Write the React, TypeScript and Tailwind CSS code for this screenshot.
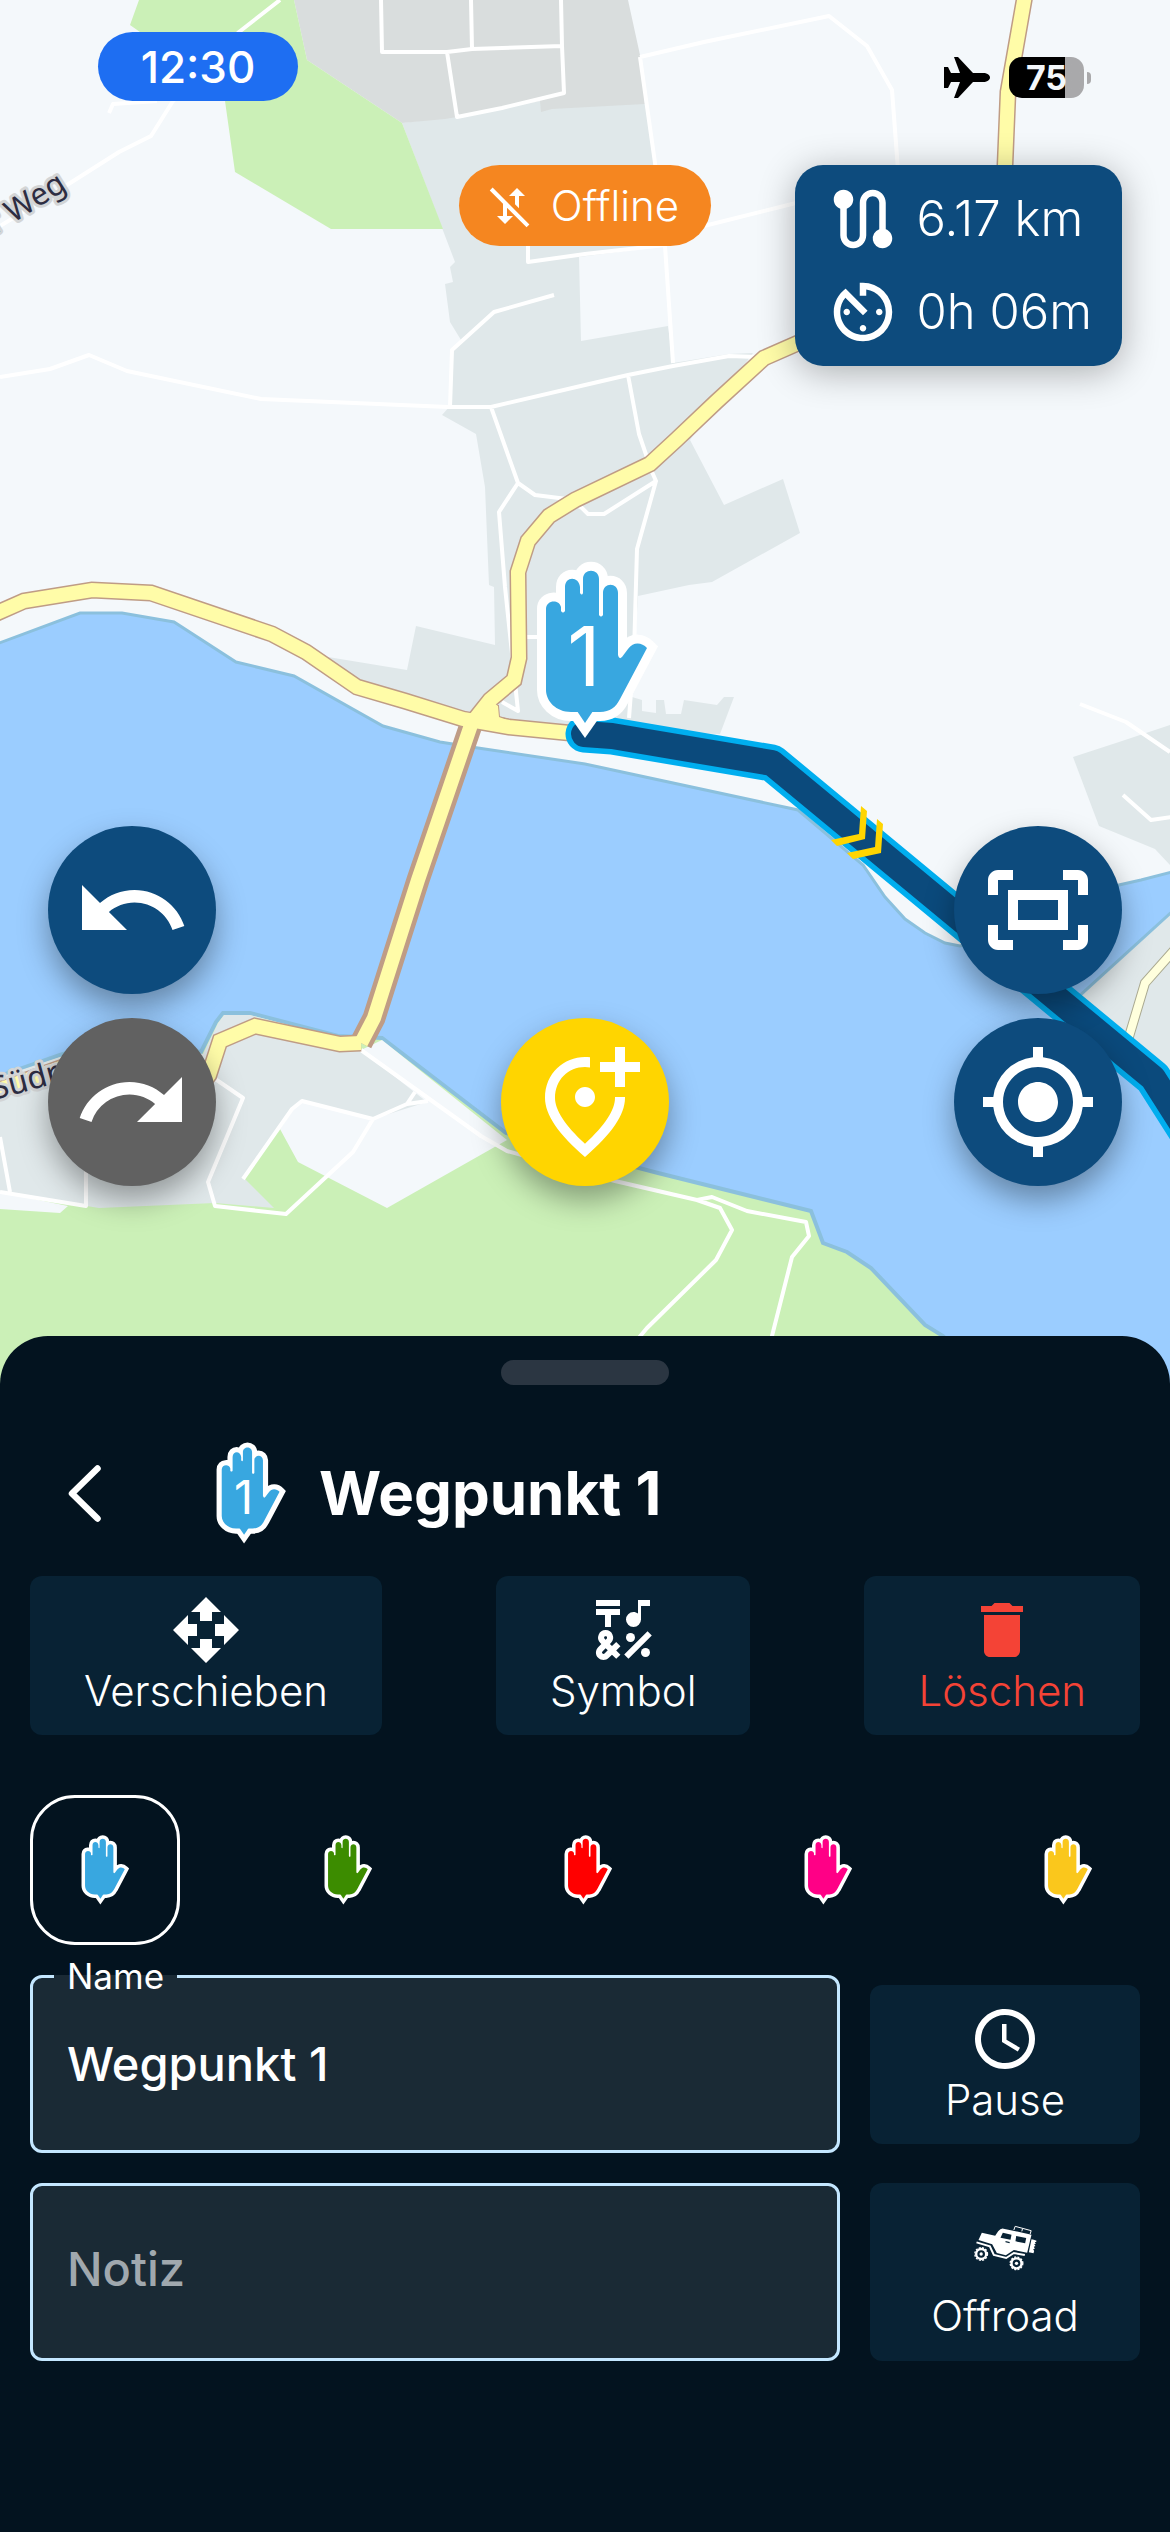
import { ReactNode, useState } from "react";
import { IconType } from "react-icons";
import {
  MdAccessTime,
  MdAvTimer,
  MdDelete,
  MdEmojiSymbols,
  MdMobiledataOff,
  MdMyLocation,
  MdOpenWith,
  MdOutlineAddLocationAlt,
  MdOutlineFitScreen,
  MdRedo,
  MdRoute,
  MdUndo,
} from "react-icons/md";

const markerColors = [
  { name: "Blau", value: "#38a7e0" },
  { name: "Grün", value: "#3c8c00" },
  { name: "Rot", value: "#ff0000" },
  { name: "Pink", value: "#ff0086" },
  { name: "Gelb", value: "#fac71c" },
];

const minorRoads = [
  "M381 0L382 52L447 52L472 49L562 46L561 0",
  "M471 0L472 49",
  "M447 52L457 117L502 108L564 93L562 46",
  "M280 0L239 32L173 101L151 136L119 152L67 185L0 226",
  "M109 113L113 104L157 101",
  "M0 377L50 369L89 355L127 371L261 399L448 407L491 407L585 385L628 375L673 366L729 356L757 357",
  "M554 295L494 312L452 350L450 407",
  "M528 200L528 262L585 254L665 245",
  "M640 57L655 163L665 246L673 363",
  "M640 57L704 42L829 16L867 46L892 90L898 170",
  "M700 227L800 202",
  "M491 407L518 483L499 512L505 587L518 711L502 702",
  "M518 483L535 495L567 499L582 508L588 514L604 514L656 481L652 472L639 434L628 375",
  "M656 481L637 549L634 653L629 718",
  "M526 637L540 637",
  "M1080 704L1126 722L1170 752",
  "M1123 795L1151 820L1172 817",
  "M0 1137L10 1192",
  "M0 1192L86 1206L86 1160",
  "M205 1072L243 1098L208 1182L215 1206L286 1214L353 1152L373 1119L302 1101L292 1109L243 1179",
  "M373 1119L407 1104L428 1101M407 1104L415 1092",
  "M361 1050L481 1136L507 1151L615 1181L697 1200L720 1208L732 1230L716 1260L647 1328L600 1384",
  "M697 1200L712 1197L747 1211L806 1222L809 1236L792 1257L772 1336L762 1384",
];

const mainRoads =
  "M-10 616L24 601L92 590L151 593L272 634L306 652L357 687L405 701L463 719L509 727L590 735" +
  "M474 720L490 700L514 680L519 658L518 572L528 541L549 516L575 500L650 464L676 440L716 402L764 358L830 329" +
  "M1025 -5L1008 92L1004 190" +
  "M361 1043L340 1044L255 1026L220 1041L209 1075L190 1100" +
  "M-10 1093L60 1068L130 1045";

const bridge = "M472 722L418 880L374 1018L361 1043";
const route = "M584 734L612 736L772 763L1153 1078L1195 1144";

const Hand = ({ color, digit }: { color: string; digit?: string }) => (
  <>
    <path
      d="M10 129V48C10 39 23 38 25 46V50Q27 53 29 50V26C29 15 43 15 44 26V32Q46 35 47 32V18C47 7 63 7 63 18V54Q65 57 67 54V32C67 21 82 21 82 32V94Q83 99 86 96L92 88C98 80 106 82 111 87L84 138C80 146 74 151 64 151H35C20 151 10 140 10 129Z"
      fill={color}
      stroke="#fff"
      strokeWidth="18"
      style={{ paintOrder: "stroke" }}
    />
    <path d="M35 157L49 177L63 157Z" fill="#fff" />
    <path d="M41 150L49 162L57 150Z" fill={color} />
    {digit && (
      <text
        x="48"
        y="125"
        fontSize="82"
        textAnchor="middle"
        fill="#fff"
        className="font-['Inter',sans-serif]"
      >
        {digit}
      </text>
    )}
  </>
);

const HandIcon = ({
  color,
  digit,
  className,
}: {
  color: string;
  digit?: string;
  className: string;
}) => (
  <svg viewBox="0 0 124 178" className={className} aria-hidden="true">
    <Hand color={color} digit={digit} />
  </svg>
);

const MapCanvas = () => (
  <svg
    viewBox="0 0 1170 1384"
    preserveAspectRatio="xMidYMin slice"
    className="absolute inset-0 h-full w-full"
    aria-hidden="true"
  >
    <rect width="1170" height="1384" fill="#f4f8fb" />

    {/* built-up areas and woods north of the river */}
    <g fill="#e0e8ea">
      <path d="M402 123L457 116L541 101L645 104L656 163L665 246L579 257L581 341L668 326L673 363L729 354L753 353L690 440L724 505L783 479L800 533L712 582L689 585L638 596L632 697L642 700L642 711L656 713L656 700L664 700L666 714L681 714L684 700L717 705L724 697L734 697L720 734L571 730L470 715L358 685L328 657L407 670L416 626L495 645L494 587L489 585L485 487L476 434L442 415L450 406L452 350L461 340L450 322L445 284L453 282L450 267L455 262Z" />
      <path d="M1073 757L1119 742L1170 725V865L1155 849L1099 826Z" />
    </g>
    <path d="M638 596L635 635L632 697L590 712V620Z" fill="#e0e8ea" />
    <path
      d="M294 0H628L640 55L645 104L552 109L541 112L540 101L457 117L445 119L402 123L307 60Z"
      fill="#d9dddd"
    />
    <path
      d="M139 0L130 25L140 32L215 60L225 101L235 172L331 229H443L402 123L307 60L294 0Z"
      fill="#cbf0b7"
    />

    {/* river */}
    <path
      d="M-6 645L80 613H122L174 622L236 662L294 676L383 726L440 742L478 748L585 764L798 810L863 865L885 897L905 919L925 933L945 943L960 946L1040 925L1119 885L1141 880L1176 871V1390H-6Z"
      fill="#9bcdff"
      stroke="#8bc0dd"
      strokeWidth="3"
    />

    {/* south bank */}
    <path
      d="M-6 1078L60 1055L110 1040L201 1052L216 1022L223 1013H250L338 1036L382 1038L506 1133L639 1168L658 1173L811 1211L823 1243L847 1252L871 1268L925 1325L943 1336L1000 1390H-6Z"
      fill="#cbf0b7"
      stroke="#8bc0dd"
      strokeWidth="4"
    />
    <path
      d="M0 1192L68 1206L60 1213L0 1209ZM280 1129L298 1162L387 1208L507 1140L382 1040L361 1050L300 1100Z"
      fill="#f4f8fb"
    />
    <path
      d="M0 1077L60 1057L110 1042L203 1054L218 1023L224 1015H250L338 1038L361 1050L427 1102L373 1119L302 1101L293 1109L244 1178L274 1208L215 1203L99 1208L0 1192Z"
      fill="#e0e8ea"
    />
    <path
      d="M1176 908L1075 1000L1150 1090L1180 1140Z"
      fill="#e0e8ea"
      stroke="#8bc0dd"
      strokeWidth="3"
    />

    <path
      d={minorRoads.join("")}
      fill="none"
      stroke="#fff"
      strokeWidth="4"
      strokeLinejoin="round"
    />
    <g fill="none">
      <path d="M1176 948L1145 983L1128 1040" stroke="#aaa990" strokeWidth="10" />
      <path d="M1176 948L1145 983L1128 1040" stroke="#ffffdd" strokeWidth="8" />
      <path d={mainRoads} stroke="#bf9c85" strokeWidth="17" />
      <path
        d="M482 704L498 706L499 717L512 721"
        stroke="#bf9c85"
        strokeWidth="2"
      />
      <path d={bridge} stroke="#bf9c85" strokeWidth="23" />
      <path d={mainRoads} stroke="#fffca8" strokeWidth="14" />
      <path d={bridge} stroke="#fffca8" strokeWidth="14" />
      <path d="M476 722L490 700L498 706L499 717L512 722Z" fill="#fffca8" />
    </g>

    <g
      className="font-['Noto_Sans',sans-serif]"
      fill="#2d2d42"
      stroke="#d3d5d6"
      strokeWidth="6"
      strokeLinejoin="round"
      style={{ paintOrder: "stroke" }}
    >
      <text
        fontSize="31"
        textAnchor="end"
        transform="translate(68 189) rotate(-32)"
      >
        r Weg
      </text>
      <text fontSize="32" transform="translate(-6 1100) rotate(-15)">
        Südr
      </text>
    </g>

    <g fill="none" strokeLinecap="round" strokeLinejoin="round">
      <path d={route} stroke="#00aeef" strokeWidth="37" />
      <path d={route} stroke="#0b4a7c" strokeWidth="26" />
    </g>
    <g fill="#ffd500">
      <path d="M861 806L867 811L865 839L837 846L831 840L859 834Z" />
      <path d="M877 819L883 824L881 853L853 859L847 853L875 847Z" />
    </g>
    <g transform="translate(536 561)">
      <Hand color="#38a7e0" digit="1" />
    </g>
  </svg>
);

const StatusBar = () => (
  <header className="relative flex items-start justify-between pt-8 pr-[79px] pl-[98px]">
    <div className="flex h-[69px] w-[200px] items-center justify-center rounded-full bg-[#1e6ef2] text-[44px] font-medium text-white">
      12:30
    </div>
    <div className="mt-[25px] flex items-center">
      <svg viewBox="0 0 46 41" className="h-[41px] w-[46px]" aria-hidden="true">
        <path d="M0 10H4L7 16L16 16L10 0H14L29 16H39C43 16 46 18 46 20.500C46 23 43 25 39 25H29L14 41H10L16 25L7 25L4 31H0Z" />
      </svg>
      <div className="ml-[19px] flex h-[41px] w-[75px] items-center justify-center rounded-[13px] bg-linear-to-r from-black from-75% to-[#a9a9ab] to-75% text-[34px] font-bold text-[#f4f8fb]">
        75
      </div>
      <div className="ml-[3px] h-3 w-1 rounded-r-full bg-[#a9a9ab]" />
    </div>
  </header>
);

interface IRoundButtonProps {
  label: string;
  icon: IconType;
  className: string;
}

const RoundButton = ({ label, icon: Icon, className }: IRoundButtonProps) => (
  <button
    type="button"
    aria-label={label}
    className={`flex h-[168px] w-[168px] items-center justify-center rounded-full text-white shadow-[0_14px_30px_rgba(0,0,0,0.35)] ${className}`}
  >
    <Icon size={120} />
  </button>
);

const TripStat = ({ icon: Icon, value }: { icon: IconType; value: string }) => (
  <div className="flex items-center gap-[15px]">
    <Icon size={78} />
    <span>{value}</span>
  </div>
);

interface IActionButtonProps {
  label: string;
  children: ReactNode;
  className?: string;
}

const ActionButton = ({
  label,
  children,
  className = "text-white",
}: IActionButtonProps) => (
  <button
    type="button"
    className={`flex flex-col items-center rounded-xl bg-[#082234] pt-[18px] pb-5 text-[42px] leading-[49px] font-light ${className}`}
  >
    {children}
    {label}
  </button>
);

const JeepIcon = () => (
  <svg viewBox="455 181 200 270" className="h-[90px] w-[67px]" aria-hidden="true">
    <g fill="none" stroke="#fff">
      <path d="M580 268L584 257L632 270L629 280M606 264L604 272" strokeWidth="3" />
      <path
        d="M468 305L508 317L520 343L557 352L580 337L613 343"
        strokeWidth="6"
      />
      <circle cx="482" cy="340" r="15" strokeWidth="7" />
      <circle cx="482" cy="340" r="19" strokeWidth="4" strokeDasharray="6 4" />
      <circle cx="588" cy="368" r="15" strokeWidth="7" />
      <circle cx="588" cy="368" r="19" strokeWidth="4" strokeDasharray="6 4" />
    </g>
    <g fill="#fff">
      <circle cx="482" cy="340" r="5" />
      <circle cx="588" cy="368" r="5" />
      <path d="M484 276L524 285L533 272Q541 262 549 264L633 282L620 336L580 328L556 344L529 337L515 311L474 298Z" />
      <path d="M633 296L640 297L648 300L647 304L643 304L646 309L641 311L645 316L640 318L643 324L638 326L641 331L639 338L625 335Z" />
    </g>
    <g fill="#082234">
      <path d="M547 276L573 282L570 297L540 291Z" />
      <path d="M587 286L617 292L614 308L585 302Z" />
      <path d="M555 301L568 304L567 308L555 305Z" />
    </g>
  </svg>
);

const App = () => {
  const [name, setName] = useState<string>("Wegpunkt 1");
  const [note, setNote] = useState<string>("");
  const [color, setColor] = useState<string>(markerColors[0].value);

  return (
    <div className="flex min-h-screen flex-col bg-[#03131f] font-['Inter',sans-serif]">
      <section className="relative flex h-[1384px] flex-col overflow-hidden">
        <MapCanvas />
        <StatusBar />

        <div className="relative mt-16 grid grid-cols-[1fr_auto_1fr] items-start px-12">
          <div />
          <div className="flex h-[81px] items-center gap-4 rounded-full bg-[#f58620] pr-8 pl-7 text-[42px] font-light text-white">
            <MdMobiledataOff size={48} />
            Offline
          </div>
          <div className="flex flex-col gap-[15px] justify-self-end rounded-[28px] bg-[#0d4b7d] py-[15px] pr-[30px] pl-[29px] text-[49px] font-light text-white shadow-[0_6px_36px_rgba(0,0,0,0.3)]">
            <TripStat icon={MdRoute} value="6.17 km" />
            <TripStat icon={MdAvTimer} value="0h 06m" />
          </div>
        </div>

        <div className="relative mt-auto mb-[198px] grid grid-cols-3 items-end px-12">
          <div className="flex flex-col gap-6">
            <RoundButton label="Rückgängig" icon={MdUndo} className="bg-[#0d4b7d]" />
            <RoundButton label="Wiederholen" icon={MdRedo} className="bg-[#616161]" />
          </div>
          <RoundButton
            label="Wegpunkt hinzufügen"
            icon={MdOutlineAddLocationAlt}
            className="justify-self-center bg-[#ffd500]"
          />
          <div className="flex flex-col gap-6 justify-self-end">
            <RoundButton
              label="Route einpassen"
              icon={MdOutlineFitScreen}
              className="bg-[#0d4b7d]"
            />
            <RoundButton label="Mein Standort" icon={MdMyLocation} className="bg-[#0d4b7d]" />
          </div>
        </div>
      </section>

      <section className="relative -mt-12 flex flex-1 flex-col rounded-t-[48px] bg-[#03131f] px-[30px] pt-6 text-white">
        <div className="h-[25px] w-[168px] self-center rounded-full bg-[#2b3642]" />

        <div className="mt-[57px] flex h-[102px] items-center">
          <button
            type="button"
            aria-label="Zurück"
            className="flex h-full w-[108px] items-center justify-center"
          >
            <svg viewBox="0 0 33 57" className="h-[57px] w-[33px]" aria-hidden="true">
              <path
                d="M29.500 3.500L4 28.500L29.500 53.500"
                fill="none"
                stroke="#fff"
                strokeWidth="6.500"
                strokeLinecap="round"
                strokeLinejoin="round"
              />
            </svg>
          </button>
          <HandIcon color={color} digit="1" className="ml-[78px] h-[102px] w-[71px]" />
          <h1 className="ml-8 text-[60px] leading-[72px] font-bold">{name}</h1>
        </div>

        <div className="mt-8 flex justify-between">
          <ActionButton label="Verschieben" className="px-[54px]">
            <MdOpenWith size={72} />
          </ActionButton>
          <ActionButton label="Symbol" className="px-[54px]">
            <MdEmojiSymbols size={72} />
          </ActionButton>
          <ActionButton label="Löschen" className="px-[54px] text-[#f44336]">
            <MdDelete size={72} />
          </ActionButton>
        </div>

        <div className="mt-[60px] flex h-[150px] items-center justify-between">
          {markerColors.map((marker) => (
            <button
              key={marker.value}
              type="button"
              aria-label={marker.name}
              aria-pressed={marker.value === color}
              onClick={() => setColor(marker.value)}
              className={`flex items-center justify-center ${
                marker.value === color
                  ? "h-[150px] w-[150px] rounded-[45px] border-3 border-white"
                  : "h-36 w-36"
              }`}
            >
              <HandIcon color={marker.value} className="h-[70px] w-[49px]" />
            </button>
          ))}
        </div>

        <div className="mt-3 flex items-end gap-[30px]">
          <fieldset className="min-w-0 flex-1 rounded-xl border-3 border-[#c4e7ff] bg-[#1a2a35]">
            <legend className="ml-[21px] px-[13px] text-[35px] leading-[38px]">
              <label htmlFor="waypoint-name">Name</label>
            </legend>
            <input
              id="waypoint-name"
              type="text"
              value={name}
              onChange={(e) => setName(e.target.value)}
              className="block h-[155px] w-full px-[34px] pb-[18px] text-[47px] font-medium outline-none"
            />
          </fieldset>
          <div className="flex h-[178px] w-[270px] items-center">
            <ActionButton label="Pause" className="w-full">
              <MdAccessTime size={72} />
            </ActionButton>
          </div>
        </div>

        <div className="mt-[30px] flex gap-[30px]">
          <input
            type="text"
            aria-label="Notiz"
            placeholder="Notiz"
            value={note}
            onChange={(e) => setNote(e.target.value)}
            className="h-[178px] min-w-0 flex-1 rounded-xl border-3 border-[#c4e7ff] bg-[#1a2a35] px-[34px] pb-2 text-[47px] font-medium outline-none placeholder:text-[#a0a8ae]"
          />
          <ActionButton label="Offroad" className="w-[270px]">
            <JeepIcon />
          </ActionButton>
        </div>
      </section>
    </div>
  );
};

export default App;
